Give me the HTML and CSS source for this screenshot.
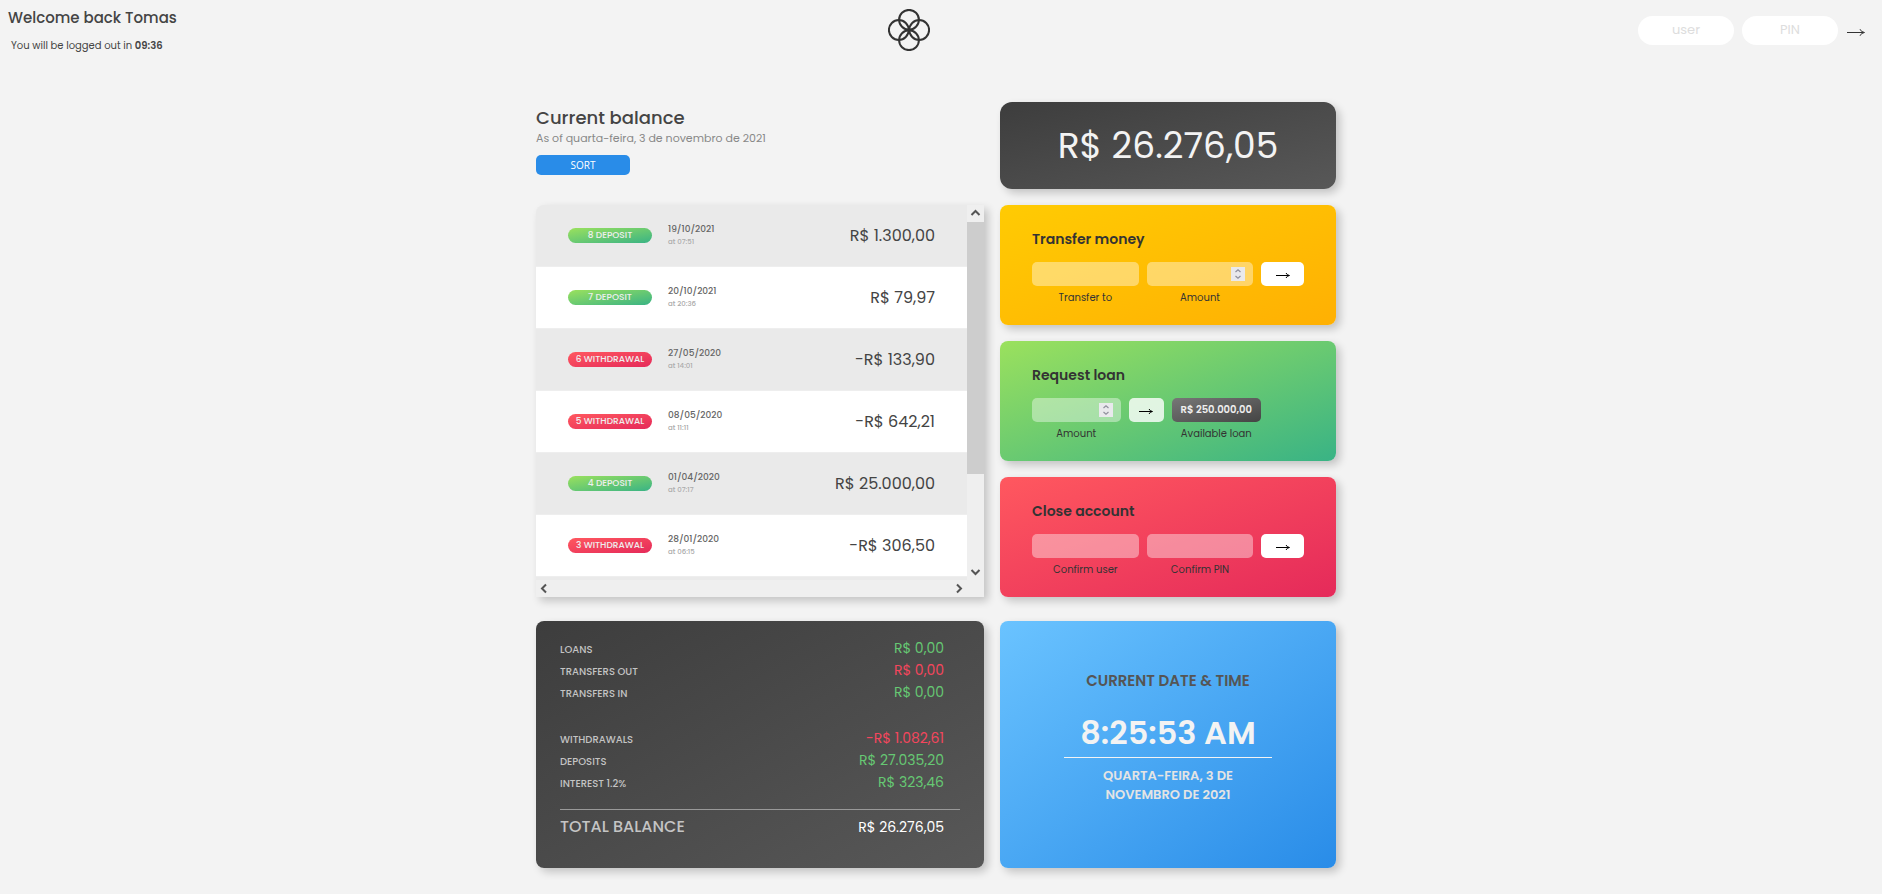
FILE: index.html
```html
<!DOCTYPE html>
<html lang="en">
<head>
<meta charset="utf-8">
<meta name="viewport" content="width=device-width, initial-scale=1">
<title>Bankist</title>
<link rel="stylesheet" href="styles.css">
</head>
<body>
<nav class="nav">
  <div class="greeting">
    <p class="welcome">Welcome back Tomas</p>
    <p class="logout-timer">You will be logged out in <b>09:36</b></p>
  </div>
  <svg class="logo" viewBox="0 0 42 42" role="img" aria-label="Logo">
    <circle cx="21" cy="10.8" r="9.9"/><circle cx="10.8" cy="21" r="9.9"/><circle cx="31.2" cy="21" r="9.9"/><circle cx="21" cy="31.2" r="9.9"/>
  </svg>
  <form class="login">
    <input class="login-input" type="text" placeholder="user" aria-label="user">
    <input class="login-input" type="text" placeholder="PIN" aria-label="PIN">
    <button class="login-btn" type="button" aria-label="Log in"><svg viewBox="0 0 18 10"><path d="M0 5.500H16.500"/><path d="M13 2.200Q14 5 17.500 5.500Q14 6 13 8.800"/></svg></button>
  </form>
</nav>

<main class="app">
  <header class="balance">
    <h1 class="balance-title">Current balance</h1>
    <p class="balance-date">As of quarta-feira, 3 de novembro de 2021</p>
    <button class="sort-btn" type="button">SORT</button>
  </header>
  <p class="card balance-value">R$&nbsp;26.276,05</p>

  <section class="movements" aria-label="Movements">
    <ul class="movement-list">
      <li class="movement"><span class="badge deposit">8 DEPOSIT</span><div class="when"><span class="date">19/10/2021</span><span class="time">at 07:51</span></div><span class="amount">R$&nbsp;1.300,00</span></li>
      <li class="movement"><span class="badge deposit">7 DEPOSIT</span><div class="when"><span class="date">20/10/2021</span><span class="time">at 20:36</span></div><span class="amount">R$&nbsp;79,97</span></li>
      <li class="movement"><span class="badge withdrawal">6 WITHDRAWAL</span><div class="when"><span class="date">27/05/2020</span><span class="time">at 14:01</span></div><span class="amount">-R$&nbsp;133,90</span></li>
      <li class="movement"><span class="badge withdrawal">5 WITHDRAWAL</span><div class="when"><span class="date">08/05/2020</span><span class="time">at 11:11</span></div><span class="amount">-R$&nbsp;642,21</span></li>
      <li class="movement"><span class="badge deposit">4 DEPOSIT</span><div class="when"><span class="date">01/04/2020</span><span class="time">at 07:17</span></div><span class="amount">R$&nbsp;25.000,00</span></li>
      <li class="movement"><span class="badge withdrawal">3 WITHDRAWAL</span><div class="when"><span class="date">28/01/2020</span><span class="time">at 06:15</span></div><span class="amount">-R$&nbsp;306,50</span></li>
      <li class="movement"></li>
    </ul>
    <div class="scroll-v">
      <svg class="chevron" viewBox="0 0 17 17"><path d="M4.500 10L8.500 6L12.500 10"/></svg>
      <div class="track"><div class="thumb"></div></div>
      <svg class="chevron" viewBox="0 0 17 17"><path d="M4.500 7L8.500 11L12.500 7"/></svg>
    </div>
    <div class="scroll-h">
      <svg class="chevron" viewBox="0 0 17 17"><path d="M10 4.500L6 8.500L10 12.500"/></svg>
      <svg class="chevron" viewBox="0 0 17 17"><path d="M7 4.500L11 8.500L7 12.500"/></svg>
    </div>
  </section>

  <div class="operations">
    <section class="card operation transfer">
      <h2 class="operation-title">Transfer money</h2>
      <form class="operation-form">
        <input class="field" id="transfer-to" type="text">
        <div class="number">
          <input class="field" id="transfer-amount" type="number">
          <svg class="spinner" viewBox="0 0 14 14"><path d="M4.500 5L7 2.800L9.500 5M4.500 9L7 11.200L9.500 9"/></svg>
        </div>
        <button class="submit" type="button" aria-label="Transfer"><svg class="arrow" viewBox="0 0 14 8"><path d="M0 4.500H13"/><path d="M10 2Q11 4.200 13.500 4.500Q11 4.800 10 7"/></svg></button>
        <label class="label" for="transfer-to">Transfer to</label>
        <label class="label" for="transfer-amount">Amount</label>
      </form>
    </section>

    <section class="card operation loan">
      <h2 class="operation-title">Request loan</h2>
      <form class="operation-form loan-form">
        <div class="number">
          <input class="field" id="loan-amount" type="number">
          <svg class="spinner" viewBox="0 0 14 14"><path d="M4.500 5L7 2.800L9.500 5M4.500 9L7 11.200L9.500 9"/></svg>
        </div>
        <button class="submit soft" type="button" aria-label="Request"><svg class="arrow" viewBox="0 0 14 8"><path d="M0 4.500H13"/><path d="M10 2Q11 4.200 13.500 4.500Q11 4.800 10 7"/></svg></button>
        <output class="available" id="available">R$&nbsp;250.000,00</output>
        <label class="label" for="loan-amount">Amount</label>
        <label class="label label-available" for="available">Available loan</label>
      </form>
    </section>

    <section class="card operation close">
      <h2 class="operation-title">Close account</h2>
      <form class="operation-form">
        <input class="field" id="close-user" type="text">
        <input class="field" id="close-pin" type="password">
        <button class="submit" type="button" aria-label="Close account"><svg class="arrow" viewBox="0 0 14 8"><path d="M0 4.500H13"/><path d="M10 2Q11 4.200 13.500 4.500Q11 4.800 10 7"/></svg></button>
        <label class="label" for="close-user">Confirm user</label>
        <label class="label" for="close-pin">Confirm PIN</label>
      </form>
    </section>
  </div>

  <section class="card summary" aria-label="Summary">
    <dl class="summary-group">
      <div class="summary-row"><dt>LOANS</dt><dd class="in">R$&nbsp;0,00</dd></div>
      <div class="summary-row"><dt>TRANSFERS OUT</dt><dd class="out">R$&nbsp;0,00</dd></div>
      <div class="summary-row"><dt>TRANSFERS IN</dt><dd class="in">R$&nbsp;0,00</dd></div>
    </dl>
    <dl class="summary-group">
      <div class="summary-row"><dt>WITHDRAWALS</dt><dd class="out">-R$&nbsp;1.082,61</dd></div>
      <div class="summary-row"><dt>DEPOSITS</dt><dd class="in">R$&nbsp;27.035,20</dd></div>
      <div class="summary-row"><dt>INTEREST 1.2%</dt><dd class="in">R$&nbsp;323,46</dd></div>
    </dl>
    <dl class="summary-total">
      <div class="summary-row"><dt>TOTAL BALANCE</dt><dd>R$&nbsp;26.276,05</dd></div>
    </dl>
  </section>

  <section class="card clock">
    <h2 class="clock-title">CURRENT DATE &amp; TIME</h2>
    <p class="clock-time">8:25:53 AM</p>
    <p class="clock-date">QUARTA-FEIRA, 3 DE NOVEMBRO DE 2021</p>
  </section>
</main>
</body>
</html>
```

FILE: styles.css
```css
* {
  box-sizing: border-box;
  margin: 0;
  padding: 0;
}

body {
  background: #f3f3f3;
  color: #444;
  font-family: Poppins, Inter, "Open Sans", sans-serif;
}

button,
input {
  border: 0;
  font-family: inherit;
}

button {
  cursor: pointer;
}

/* Top bar */
.nav {
  display: flex;
  align-items: center;
  justify-content: space-between;
  height: 60px;
  padding: 0 8px;
}

.greeting {
  min-width: 172px;
}

.welcome {
  padding-top: 2px;
  font-size: 15px;
  line-height: 24px;
  font-weight: 500;
}

.logout-timer {
  padding: 6px 3px 0;
  font-size: 10px;
  line-height: 20px;
}

.logout-timer b {
  font-weight: 600;
}

.logo {
  width: 42px;
  height: 42px;
  fill: none;
  stroke: #333;
  stroke-width: 2;
}

.login {
  display: flex;
  align-items: center;
  gap: 8px;
}

.login-input {
  width: 96px;
  height: 29px;
  border-radius: 16px;
  background: #fff;
  font-size: 13px;
  text-align: center;
}

.login-input::placeholder {
  color: #ddd;
}

.login-btn {
  display: flex;
  width: 28px;
  padding: 4px 1px 0;
  background: none;
}

.login-btn svg {
  width: 18px;
  height: 10px;
  fill: none;
  stroke: #333;
}

/* Page grid */
.app {
  display: grid;
  grid-template-columns: 4fr 3fr;
  column-gap: 16px;
  max-width: 810px;
  margin: 42px auto 24px;
  padding-right: 10px;
}

.card {
  border-radius: 8px;
  box-shadow: 4px 4px 8px rgba(0, 0, 0, 0.2);
}

.balance {
  padding-top: 3px;
}

.balance-title {
  font-size: 18px;
  line-height: 26px;
  font-weight: 500;
}

.balance-date {
  color: #888;
  font-size: 11px;
  line-height: 15px;
}

.sort-btn {
  width: 94px;
  height: 20px;
  margin-top: 9px;
  border-radius: 5px;
  background: #298ce8;
  color: #fff;
  font-family: "Open Sans", sans-serif;
  font-size: 10px;
}

.balance-value {
  border-radius: 12px;
  background: linear-gradient(to bottom right, #3d3d3d, #585858);
  color: #f3f3f3;
  font-size: 36px;
  line-height: 87px;
  text-align: center;
}

/* Movements */
.movements {
  display: grid;
  grid-template-columns: 1fr 17px;
  grid-template-rows: 375px 17px;
  overflow: hidden;
  border-radius: 8px 0 0 0;
  background: #efefef;
  box-shadow: 4px 4px 8px rgba(0, 0, 0, 0.2);
}

.movements,
.operations {
  margin-top: 16px;
}

.movement-list {
  overflow: hidden;
  list-style: none;
}

.movement {
  display: flex;
  align-items: center;
  height: 62px;
  padding: 0 32px;
  border-bottom: 1px solid #eee;
  background: #fff;
}

.movement:nth-child(odd) {
  background: #eaeaea;
}

.badge {
  width: 84px;
  border-radius: 8px;
  color: #eee;
  font-size: 9px;
  font-weight: 500;
  line-height: 15px;
  text-align: center;
}

.deposit,
.loan {
  background: linear-gradient(to bottom right, #9be15d, #39b385);
}

.withdrawal,
.close {
  background: linear-gradient(to bottom right, #ff585f, #e52a5a);
}

.when {
  display: grid;
  padding: 0 16px 2px;
}

.date {
  color: #666;
  font-size: 9px;
  line-height: 14px;
  font-weight: 500;
}

.time {
  color: #aaa;
  font-size: 7px;
  line-height: 11px;
  font-weight: 500;
}

.amount {
  margin-left: auto;
  font-size: 16px;
}

.scroll-v {
  display: flex;
  flex-direction: column;
}

.scroll-h {
  display: flex;
  justify-content: space-between;
}

.track {
  flex: 1;
}

.thumb {
  height: 74%;
  background: #cdcdcd;
}

.chevron {
  width: 17px;
  height: 17px;
  fill: none;
  stroke: #555;
  stroke-width: 2;
}

/* Operations */
.operations {
  display: grid;
  gap: 16px;
}

.operation {
  padding: 22px 32px 18px;
}

.transfer {
  background: linear-gradient(to bottom right, #ffcb03, #ffb003);
}

.operation-title {
  color: #333;
  font-size: 14px;
  line-height: 24px;
  font-weight: 600;
}

.operation-form {
  display: grid;
  grid-template-columns: 5fr 5fr 2fr;
  column-gap: 8px;
  margin-top: 11px;
}

.loan-form {
  grid-template-columns: 5fr 2fr 5fr 2fr;
}

.field {
  display: block;
  width: 100%;
  height: 24px;
  border-radius: 5px;
  background: rgba(255, 255, 255, 0.4);
  text-align: center;
  appearance: textfield;
}

.number {
  position: relative;
}

.spinner {
  position: absolute;
  top: 5px;
  right: 8px;
  width: 14px;
  height: 14px;
  background: #e9e9ed;
  fill: none;
  stroke: #8f8f9d;
  stroke-width: 1.2;
}

.submit {
  display: grid;
  height: 24px;
  place-items: center;
  padding-top: 2px;
  border-radius: 5px;
  background: #fff;
}

.soft {
  background: rgba(255, 255, 255, 0.8);
}

.arrow {
  width: 14px;
  height: 8px;
  fill: none;
  stroke: #000;
}

.available {
  border-radius: 5px;
  background: linear-gradient(to bottom right, #777, #444);
  color: #eee;
  font-size: 10px;
  font-weight: 600;
  line-height: 24px;
  text-align: center;
}

.label {
  grid-row: 2;
  padding-top: 3px;
  color: #333;
  font-size: 10px;
  line-height: 18px;
  text-align: center;
}

.label-available {
  grid-column: 3;
}

/* Summary */
.summary,
.clock {
  margin-top: 24px;
}

.summary {
  padding: 16px 24px 30px;
  background: linear-gradient(to bottom right, #3d3d3d, #585858);
}

.summary-group {
  margin-bottom: 24px;
}

.summary-group + .summary-group {
  margin-bottom: 16px;
}

.summary-row {
  display: flex;
  align-items: baseline;
  justify-content: space-between;
  height: 22px;
  padding-right: 16px;
  line-height: 22px;
}

.summary-row dt {
  color: #c4c4c4;
  font-size: 10px;
  font-weight: 500;
}

.summary-row dd {
  font-size: 14px;
}

.summary-row .in {
  color: #66c873;
}

.summary-row .out {
  color: #f5465d;
}

.summary-total {
  padding-top: 6px;
  border-top: 1px solid #999;
}

.summary-total .summary-row dt {
  font-size: 16px;
}

.summary-total .summary-row dd {
  color: #fff;
}

/* Clock */
.clock {
  padding: 48px 64px;
  background: linear-gradient(to bottom right, #6ac3ff, #298ce8);
  text-align: center;
}

.clock-title {
  color: #555;
  font-size: 15px;
  line-height: 24px;
  font-weight: 600;
  white-space: nowrap;
}

.clock-time {
  margin-top: 16px;
  padding-bottom: 1px;
  border-bottom: 1px solid #f3f3f3;
  color: #f3f3f3;
  font-size: 32px;
  line-height: 47px;
  font-weight: 600;
}

.clock-date {
  padding: 8px 32px 0;
  color: #e4e4e4;
  font-size: 13px;
  line-height: 19px;
  font-weight: 600;
}
```
